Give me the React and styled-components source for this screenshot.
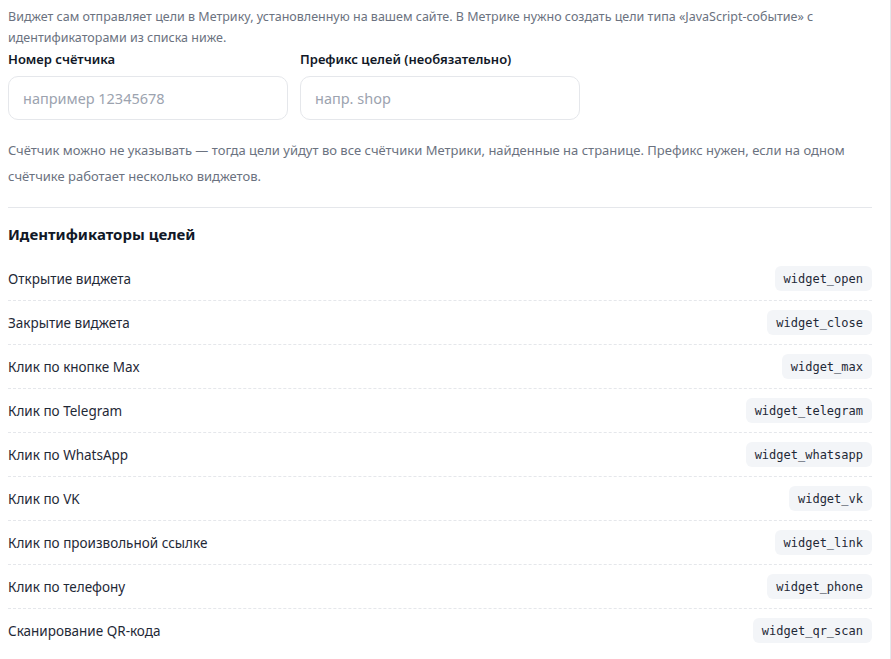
import React from "react";
import styled, { createGlobalStyle } from "styled-components";

const GlobalStyle = createGlobalStyle`
  * {
    box-sizing: border-box;
  }
  body {
    margin: 0;
    background: #ffffff;
    font-family: "Segoe UI", "Noto Sans", "Open Sans", sans-serif;
    color: #111827;
  }
`;

const Panel = styled.section`
  width: 891px;
  min-height: 659px;
  padding: 6px 18px 0 8px;
  border-right: 1px solid #e5e7eb;
`;

const Intro = styled.p`
  margin: 0;
  font-size: 12.5px;
  line-height: 21px;
  color: #6b7280;
`;

const Fields = styled.div`
  display: flex;
  gap: 12px;
  margin-top: 1px;
`;

const Field = styled.label`
  display: flex;
  flex-direction: column;
  width: 280px;
`;

const FieldLabel = styled.span`
  font-size: 13px;
  font-weight: 600;
  line-height: 20px;
  color: #111827;
  margin-bottom: 7px;
`;

const Input = styled.input`
  height: 44px;
  padding: 0 14px;
  border: 1px solid #e5e7eb;
  border-radius: 10px;
  font-family: inherit;
  font-size: 14.5px;
  color: #111827;
  outline: none;
  &::placeholder {
    color: #9ca3af;
  }
`;

const Hint = styled.p`
  margin: 17px 0 0;
  font-size: 13px;
  line-height: 26px;
  color: #6b7280;
`;

const Divider = styled.hr`
  margin: 18px 0 0;
  border: 0;
  border-top: 1px solid #e5e7eb;
`;

const Heading = styled.h3`
  margin: 15px 0 12px;
  font-size: 15px;
  font-weight: 700;
  line-height: 22px;
  color: #111827;
`;

const GoalList = styled.ul`
  list-style: none;
  margin: 0;
  padding: 0;
`;

const GoalRow = styled.li`
  display: flex;
  align-items: center;
  justify-content: space-between;
  padding: 9px 0;
  border-bottom: 1px dashed ${(p) => (p.$last ? "transparent" : "#e5e7eb")};
`;

const GoalName = styled.span`
  font-size: 13.5px;
  color: #1f2937;
`;

const Code = styled.code`
  display: inline-flex;
  align-items: center;
  height: 25px;
  padding: 0 9px;
  border-radius: 6px;
  background: #f3f5f8;
  font-family: "DejaVu Sans Mono", "Liberation Mono", monospace;
  font-size: 12px;
  color: #1f2937;
`;

const goals = [
  ["Открытие виджета", "widget_open"],
  ["Закрытие виджета", "widget_close"],
  ["Клик по кнопке Max", "widget_max"],
  ["Клик по Telegram", "widget_telegram"],
  ["Клик по WhatsApp", "widget_whatsapp"],
  ["Клик по VK", "widget_vk"],
  ["Клик по произвольной ссылке", "widget_link"],
  ["Клик по телефону", "widget_phone"],
  ["Сканирование QR-кода", "widget_qr_scan"],
];

export default function App() {
  return (
    <>
      <GlobalStyle />
      <Panel>
        <Intro>
          Виджет сам отправляет цели в Метрику, установленную на вашем сайте. В
          Метрике нужно создать цели типа «JavaScript-событие» с
          идентификаторами из списка ниже.
        </Intro>
        <Fields>
          <Field>
            <FieldLabel>Номер счётчика</FieldLabel>
            <Input placeholder="например 12345678" />
          </Field>
          <Field>
            <FieldLabel>Префикс целей (необязательно)</FieldLabel>
            <Input placeholder="напр. shop" />
          </Field>
        </Fields>
        <Hint>
          Счётчик можно не указывать — тогда цели уйдут во все счётчики Метрики,
          найденные на странице. Префикс нужен, если на одном счётчике работает
          несколько виджетов.
        </Hint>
        <Divider />
        <Heading>Идентификаторы целей</Heading>
        <GoalList>
          {goals.map(([name, id], i) => (
            <GoalRow key={id} $last={i === goals.length - 1}>
              <GoalName>{name}</GoalName>
              <Code>{id}</Code>
            </GoalRow>
          ))}
        </GoalList>
      </Panel>
    </>
  );
}
